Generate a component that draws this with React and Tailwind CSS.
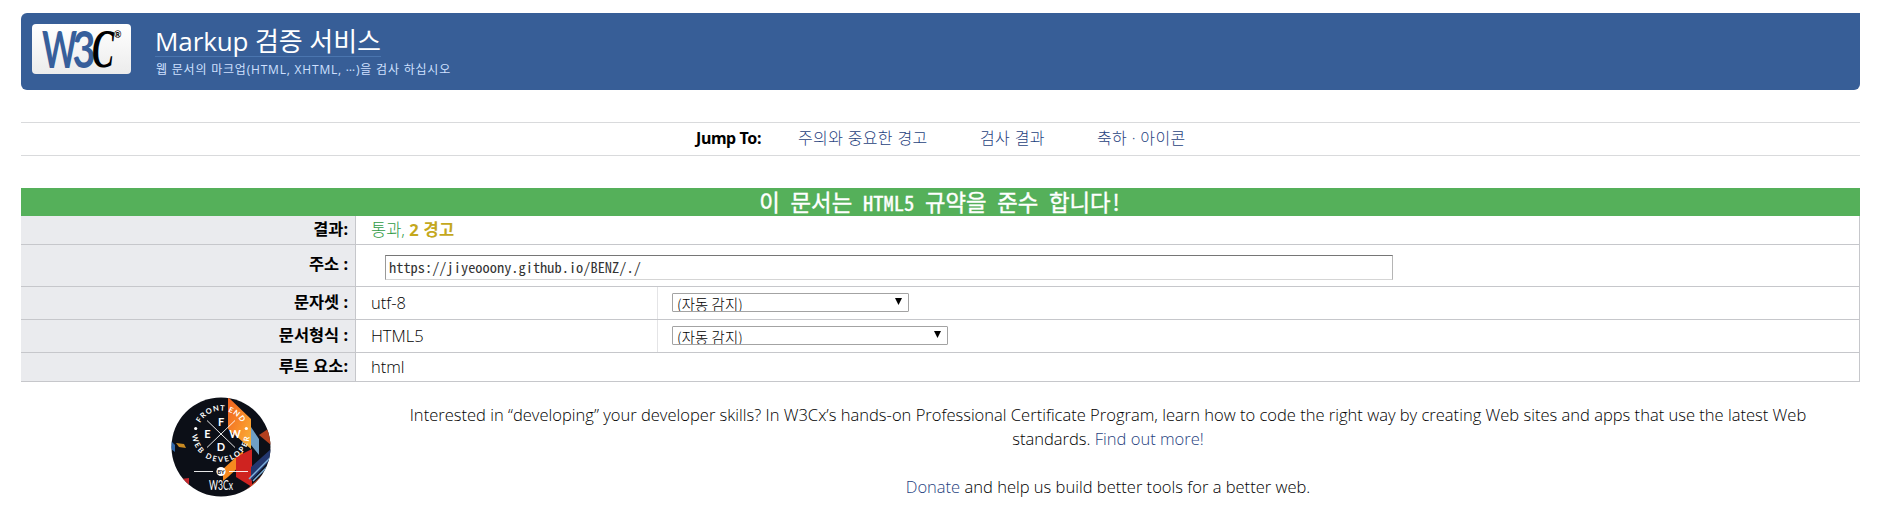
const LIGHT = "font-['Open_Sans','Noto_Sans_CJK_KR',sans-serif] font-light";
const BOLD = "font-['Noto_Sans','Noto_Sans_CJK_KR',sans-serif] font-bold";
const MONO = "font-['Noto_Sans_Mono_CJK_KR','Liberation_Mono','Noto_Sans_CJK_KR',monospace]";

function Logo() {
  return (
    <div className="h-[50px] w-[99px] rounded-[4px] bg-linear-to-b from-white to-[#ececec]">
      <svg className="overflow-visible" width="99" height="50" viewBox="0 0 99 50">
        <g fontFamily="Lato, sans-serif" fontSize="51" fill="#375f9b">
          <text x="10" y="43.5" fontWeight="700" textLength="35" lengthAdjust="spacingAndGlyphs">W</text>
          <text x="40.500" y="43.500" fontWeight="700" textLength="23" lengthAdjust="spacingAndGlyphs">3</text>
        </g>
        <text x="60" y="43" fontFamily="Liberation Serif, serif" fontSize="54" fontStyle="italic" fontWeight="700" fill="#000" textLength="22" lengthAdjust="spacingAndGlyphs">C</text>
        <text x="82" y="14" fontFamily="Lato, sans-serif" fontSize="9" fontWeight="700" fill="#000">®</text>
      </svg>
    </div>
  );
}

function Row({ label, height, children }) {
  return (
    <div className={`grid grid-cols-[335px_1fr] border-b border-[#c6c7cb] ${height}`}>
      <div className={`flex items-center justify-end border-r border-[#c6c7cb] bg-[#eaebee] pr-[7px] pb-[2px] text-[16.4px] text-black ${BOLD}`}>
        <span>{label}</span>
      </div>
      <div className={`flex items-center border-r border-[#c6c7cb] text-[16.5px] text-black ${LIGHT}`}>{children}</div>
    </div>
  );
}

function Select({ width }) {
  return (
    <div className={`flex h-[19px] items-start justify-between overflow-hidden rounded-[1px] border border-[#a3a3a3] bg-white pr-[6px] pl-[4px] ${width}`}>
      <span className="font-['Noto_Sans_CJK_KR',sans-serif] text-[14.4px] leading-[19px] font-light tracking-[0.1px] text-black">(자동 감지)</span>
      <svg className="mt-[4px]" width="7" height="7" viewBox="0 0 7 7"><path d="M0 0h7L3.5 7z" fill="#000" /></svg>
    </div>
  );
}

function Badge() {
  return (
    <svg width="100" height="100" viewBox="0 0 100 100">
      <defs>
        <clipPath id="disc"><circle cx="50" cy="50" r="49.5" /></clipPath>
        <path id="top" d="M26.500 37 A23.500 23.500 0 0 1 73.500 37" />
        <path id="bottom" d="M21 36 A29 29 0 0 0 79 36" />
        <linearGradient id="flame" x1="0" y1="0" x2="1" y2="1">
          <stop offset="0" stopColor="#ef5f1f" /><stop offset="0.6" stopColor="#f9922b" /><stop offset="1" stopColor="#f6b63a" />
        </linearGradient>
      </defs>
      <g clipPath="url(#disc)">
        <rect width="100" height="100" fill="#0c0f17" />
        <path d="M57 0L80 22V52L57 32z" fill="url(#flame)" />
        <path d="M80 30L88 42V58L80 48z" fill="#6f9fc4" />
        <path d="M88 38L100 48V30z" fill="#b3401f" />
        <path d="M52 72L72 54V66L57 80L52 84z" fill="#f6891f" />
        <path d="M65 60L81 52V90L65 80z" fill="#cf2320" />
        <path d="M80 70L100 52V62L80 84z" fill="#23376f" />
        <path d="M78 82L100 60M82 84L100 66" stroke="#7fb2dc" strokeWidth="1.500" />
        <path d="M74 94L100 70V84L84 100z" fill="#d8471f" />
        <path d="M0 44L4 48V55L0 52z" fill="#2f66a8" />
        <path d="M5 46l8 1 2 4-7-1z" fill="#c98a22" />
        <path d="M10 82l8-1v12z" fill="#c3262c" />
        <path d="M36 23.500L64 50.500M64 23.500L36 50.500" stroke="#fff" strokeWidth="0.900" />
        <path d="M23 74.500H42M58 74.500H77" stroke="#fff" strokeWidth="0.900" />
        <circle cx="50" cy="74.500" r="4.600" fill="#fff" />
        <circle cx="24.700" cy="31.500" r="1.600" fill="#fff" />
        <circle cx="75.300" cy="31.500" r="1.600" fill="#fff" />
      </g>
      <g fill="#fff" fontFamily="Lato, sans-serif" fontWeight="700" textAnchor="middle">
        <text x="50" y="29" fontSize="11">F</text>
        <text x="36.500" y="41" fontSize="11">E</text>
        <text x="64" y="41" fontSize="11">W</text>
        <text x="50" y="54" fontSize="11">D</text>
        <text x="50" y="76.600" fontSize="5.500" fill="#111">BY</text>
        <text x="50" y="93" fontSize="13" fontWeight="400" textLength="24" lengthAdjust="spacingAndGlyphs">W3Cx</text>
      </g>
      <g fill="#fff" fontFamily="Lato, sans-serif" fontWeight="700" fontSize="7.500">
        <text letterSpacing="0.9"><textPath href="#top" startOffset="50%" textAnchor="middle">FRONT END</textPath></text>
        <text letterSpacing="1.9"><textPath href="#bottom" startOffset="50%" textAnchor="middle">WEB DEVELOPER</textPath></text>
      </g>
    </svg>
  );
}

export default function App() {
  return (
    <div className="h-[515px] overflow-hidden bg-white pt-[13px] pr-[19px] pl-[21px]">
      <header className="flex h-[77px] gap-[24px] rounded-[6px] rounded-tr-none bg-[#375e97] pt-[11px] pl-[11px] text-white">
        <Logo />
        <div className="flex flex-col">
          <h1 className="h-[33px] w-[226px] border-b border-[#4a75af] font-['Open_Sans','Noto_Sans_CJK_KR',sans-serif] text-[26px] leading-[35px] font-normal tracking-[-0.1px] whitespace-nowrap">Markup 검증 서비스</h1>
          <p className="pl-[1px] font-['Open_Sans','Noto_Sans_CJK_KR',sans-serif] text-[12px] leading-[26px] tracking-[0.8px] whitespace-nowrap text-[#cfe0ff]">웹 문서의 마크업(HTML, XHTML, <span className="inline-block -translate-y-[3px]">…</span>)을 검사 하십시오</p>
        </div>
      </header>

      <nav className={`mt-[32px] flex h-[34px] items-center border-y border-[#d9dadc] pb-[2px] pl-[674px] text-base tracking-[0.35px] whitespace-nowrap text-[#1f4280] ${LIGHT}`}>
        <span className={`w-[103px] pl-[1px] tracking-[-0.4px] text-black ${BOLD}`}>Jump To:</span>
        <a className="w-[182px]">주의와 중요한 경고</a>
        <a className="w-[117px]">검사 결과</a>
        <a>축하 · 아이콘</a>
      </nav>

      <main className="mt-[32px]">
        <h2 className={`h-[28px] bg-[#55b05a] text-center text-[22.3px] leading-[26px] [word-spacing:-0.4px] text-white [-webkit-text-stroke:0.4px_white] ${MONO}`}>이 문서는 <span className="text-[20.5px]">HTML5</span> 규약을 준수 합니다!</h2>
        <Row label="결과:" height="h-[29px]">
          <span className="pl-[15px] text-[#2f9a45]">통과, <b className={`text-[#c4a81d] tracking-[0.3px] ${BOLD}`}>2 경고</b></span>
        </Row>
        <Row label="주소 :" height="h-[42px]">
          <div className={`mt-[3px] ml-[29px] flex h-[25px] w-[1008px] items-center border border-t-[#767676] border-r-[#b5b5b5] border-b-[#d5d5d5] border-l-[#999] pl-[3px] text-[14.4px] text-[#333] ${MONO}`}>https://jiyeooony.github.io/BENZ/./</div>
        </Row>
        <Row label="문자셋 :" height="h-[33px]">
          <span className="flex h-full w-[302px] items-center border-r border-[#e4e4e6] pl-[15px]">utf-8</span>
          <div className="pb-[1px] pl-[14px]"><Select width="w-[237px]" /></div>
        </Row>
        <Row label="문서형식 :" height="h-[33px]">
          <span className="flex h-full w-[302px] items-center border-r border-[#e4e4e6] pl-[15px]">HTML5</span>
          <div className="pb-[1px] pl-[14px]"><Select width="w-[276px]" /></div>
        </Row>
        <Row label="루트 요소:" height="h-[29px]">
          <span className="pl-[15px]">html</span>
        </Row>
      </main>

      <section className="flex pt-[15px]">
        <div className="ml-[150px] w-[100px]"><Badge /></div>
        <div className={`ml-[117px] w-[1440px] pt-[6px] text-center text-[16.54px] leading-[24px] text-black ${LIGHT}`}>
          <p>Interested in “developing” your developer skills? In W3Cx’s hands-on Professional Certificate Program, learn how to code the right way by creating Web sites and apps that use the latest Web<br />standards. <a className="text-[#1f4280]">Find out more!</a></p>
          <p className="mt-[24px]"><a className="text-[#1f4280]">Donate</a> and help us build better tools for a better web.</p>
        </div>
      </section>
    </div>
  );
}
